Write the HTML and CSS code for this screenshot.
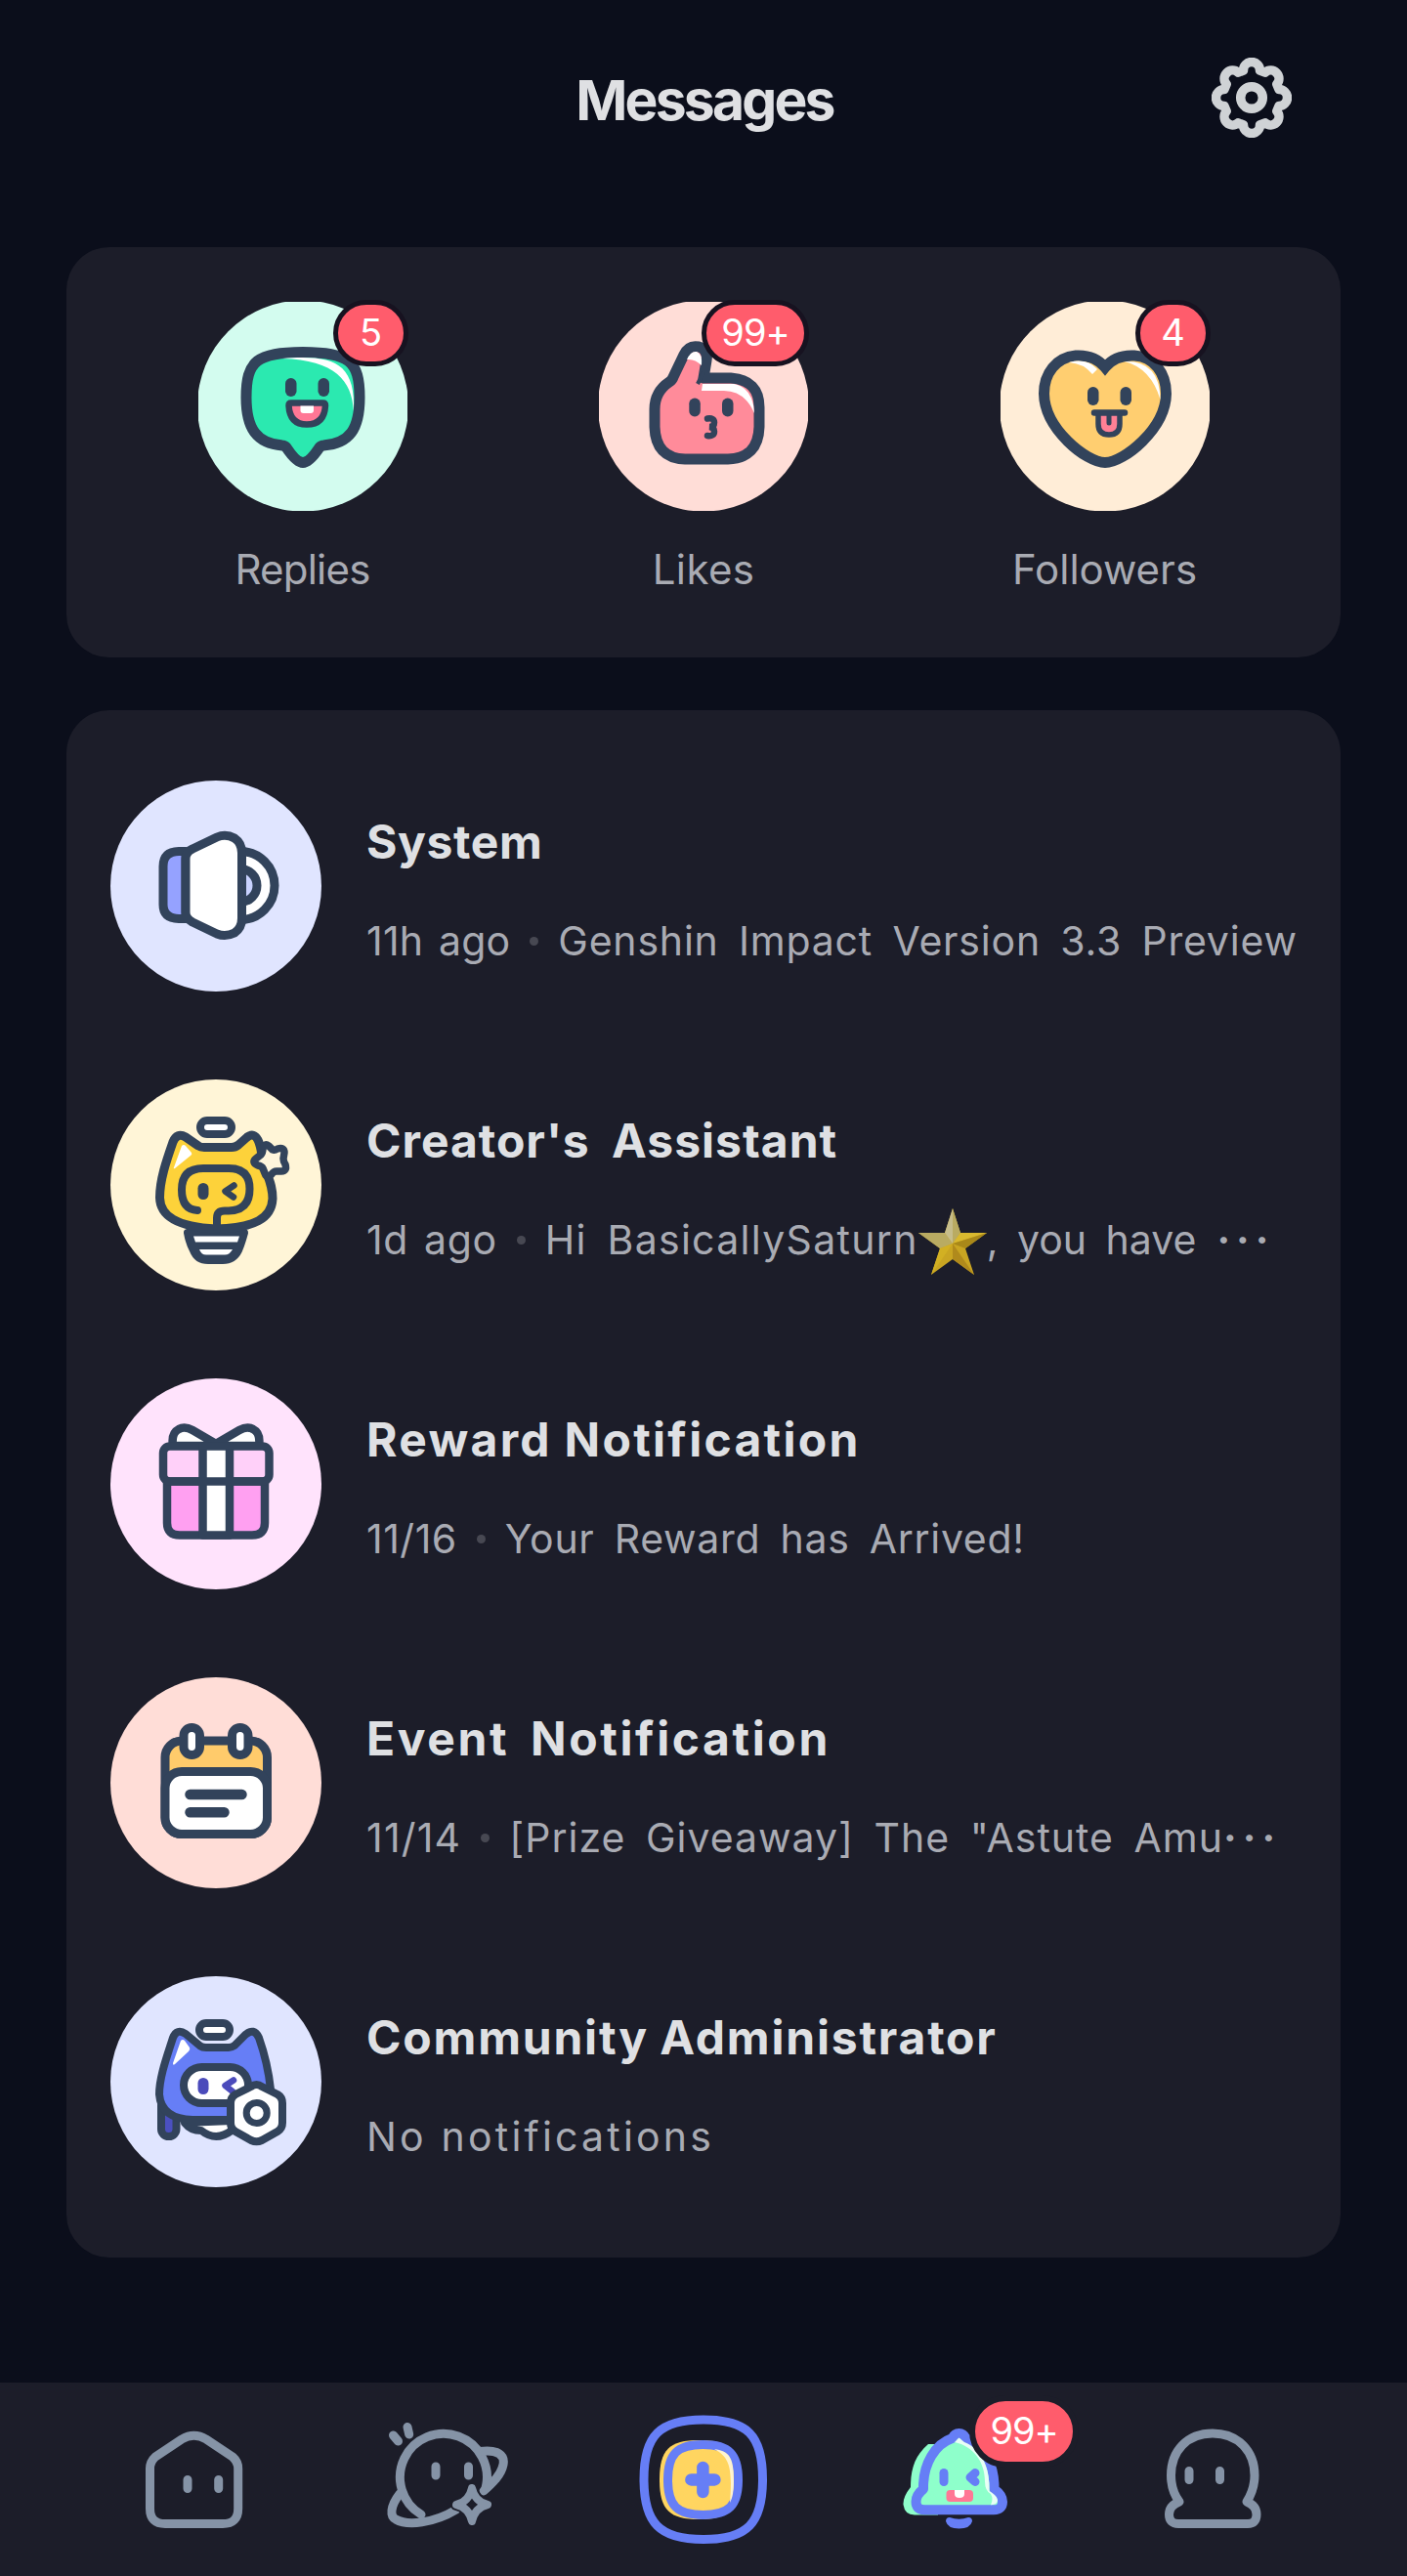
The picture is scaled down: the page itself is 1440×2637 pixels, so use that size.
FILE: index.html
```html
<!DOCTYPE html>
<html lang="en">
<head>
<meta charset="utf-8">
<title>Messages</title>
<link rel="stylesheet" href="styles.css">
</head>
<body>
<div class="screen">
  <header class="topbar">
    <h1 class="topbar-title">Messages</h1>
    <button class="settings" aria-label="Settings">
      <svg width="82" height="82" viewBox="-41 -41 82 82" fill="none" stroke="#cfd2d5" stroke-width="9.500" stroke-linejoin="round">
        <path d="M-8.5-28A8.5 8.5 0 0 1 8.5-28L13.8-25.8A8.5 8.5 0 0 1 25.8-13.8L28-8.5A8.5 8.5 0 0 1 28 8.5L25.8 13.8A8.5 8.5 0 0 1 13.8 25.8L8.5 28A8.5 8.5 0 0 1-8.5 28L-13.8 25.8A8.5 8.5 0 0 1-25.8 13.8L-28 8.5A8.5 8.5 0 0 1-28-8.5L-25.8-13.8A8.5 8.5 0 0 1-13.8-25.8Z"/>
        <circle r="11.3"/>
      </svg>
    </button>
  </header>

  <main class="content">
    <section class="card summary">
      <a class="summary-item">
        <span class="summary-icon">
          <svg width="214" height="214" viewBox="0 0 214 214">
            <circle cx="107" cy="106.5" r="108" fill="#d3fcef"/>
            <path d="M49 98C49 60 60 52 107 51.5C154 52 165 60 165 98C165 130 155 145 128 147Q126 147 124 149C118 158 112 164.500 107 164.500C102 164.500 96 158 90 149Q88 147 86 147C60 145 49 130 49 98Z" fill="#2be9b0" stroke="#32435b" stroke-width="11" stroke-linejoin="round"/>
            <path d="M86 58C138 54 161 62 159 112C157 80 140 60 86 58Z" fill="#fff"/>
            <rect x="89" y="78" width="11.500" height="19" rx="5.700" fill="#32435b"/>
            <rect x="122.500" y="78" width="11.500" height="19" rx="5.700" fill="#32435b"/>
            <path d="M92.500 106Q92.500 103.500 95 103.500H127.500Q130 103.500 130 106Q129 125.500 111 125.500Q93.500 125.500 92.500 106Z" fill="#ff7795" stroke="#32435b" stroke-width="6.500"/>
            <path d="M104.500 106.500H118V111Q118 114 115 114H107.500Q104.500 114 104.500 111Z" fill="#fff"/>
          </svg>
          <span class="badge">5</span>
        </span>
        <span class="summary-label label-replies">Replies</span>
      </a>
      <a class="summary-item">
        <span class="summary-icon">
          <svg width="214" height="214" viewBox="0 0 214 214">
            <circle cx="107" cy="106.500" r="108" fill="#ffddd7"/>
            <path d="M57 110Q57 92 72 82Q75 80 76 77L87 54Q92 44 102 46Q112 49 110 60L107 78H135Q164 80 164 108V128Q163 160 132 161H88Q58 160 57 128Z" fill="#ff8b9a" stroke="#32435b" stroke-width="11" stroke-linejoin="round"/>
            <path d="M107 72L101 84" stroke="#32435b" stroke-width="4"/>
            <path d="M106 84H138Q158 88 159 114Q149 91 128 91L105 91Z" fill="#fff"/>
            <path d="M90 59Q94 50 100 51Q106 53 105 65Q98 58 90 59Z" fill="#fff"/>
            <rect x="92.300" y="98.500" width="11.500" height="19" rx="5.700" fill="#32435b"/>
            <rect x="126" y="98.500" width="11.500" height="19" rx="5.700" fill="#32435b"/>
            <path d="M111 119.500Q118 118.500 118 123.500Q118 128 113 128Q118 128.500 118 132.500Q118 138 111 137" fill="none" stroke="#32435b" stroke-width="6.500" stroke-linecap="round"/>
          </svg>
          <span class="badge badge-wide">99+</span>
        </span>
        <span class="summary-label label-likes">Likes</span>
      </a>
      <a class="summary-item">
        <span class="summary-icon">
          <svg width="214" height="214" viewBox="0 0 214 214">
            <circle cx="107" cy="106.500" r="108" fill="#ffedd7"/>
            <path d="M107 67C98 56 86 54.500 77 55C57 57 44.500 73 44.500 94C45 130 88 164.500 107 164.500C126 164.500 169 130 169.500 94C169.500 73 157 56 137 55C128 54.500 116 56 107 67Z" fill="#ffce70" stroke="#32435b" stroke-width="11" stroke-linejoin="miter"/>
            <path d="M70 62Q88 57 99 69L94 74Q85 63 70 62Z" fill="#fff"/>
            <path d="M127 61Q163 60 163.500 100Q154 68 127 61Z" fill="#fff"/>
            <rect x="89" y="87" width="11.500" height="19" rx="5.700" fill="#32435b"/>
            <rect x="122.500" y="87" width="11.500" height="19" rx="5.700" fill="#32435b"/>
            <path d="M100 114V125Q100 136 111 136Q122 136 122 125V114" fill="#ff8095" stroke="#32435b" stroke-width="5.500"/>
            <path d="M111 114V124" stroke="#32435b" stroke-width="5" stroke-linecap="round"/>
            <path d="M96 113.500H127" stroke="#32435b" stroke-width="6.500" stroke-linecap="round"/>
          </svg>
          <span class="badge">4</span>
        </span>
        <span class="summary-label label-followers">Followers</span>
      </a>
    </section>

    <section class="card threads">
      <a class="thread thread-system">
        <svg class="avatar" viewBox="0 0 216 216">
          <circle cx="108" cy="108" r="108" fill="#e0e5ff"/>
          <g stroke="#32435b" stroke-width="9" stroke-linejoin="round">
            <path d="M77 72.500H70Q54 73 54 88V127Q54 141 70 141.500H77Z" fill="#95a2ff"/>
            <path d="M133 72.500A35 35 0 0 1 133 142.500Z" fill="#fff"/>
            <path d="M133 90.500A17 17 0 0 1 133 124.500Z" fill="#c9d2ff"/>
            <path d="M77 80Q77 73 84 70L109 58Q118 54 127 59Q134.500 64 134.500 74V141Q134.500 151 127 156Q118 160.500 109 157L84 145Q77 141 77 135Z" fill="#fff"/>
          </g>
        </svg>
        <div class="thread-text">
          <h2 class="thread-title">System</h2>
          <p class="thread-sub"><span class="date">11h ago</span><i class="sep"></i><span class="preview">Genshin Impact Version 3.3 Preview</span></p>
        </div>
      </a>

      <a class="thread thread-creator">
        <svg class="avatar" viewBox="0 0 216 216">
          <circle cx="108" cy="108" r="108" fill="#fff5d7"/>
          <g stroke="#32435b" stroke-width="8" stroke-linejoin="round" stroke-linecap="round">
            <path d="M79 157H137Q134 168 131 175Q126 185 115 185H100Q89 185 85 175Q81 168 79 157Z" fill="#32435b"/>
            <path d="M50.500 121C50.500 103 57 84 64 64Q68 54 77 59L90 68Q92 69.500 96 69.500H124Q128 69.500 131 67L140 59Q147 54 151 62C156 72 154 84 160 96C164 106 166 112 166 122C165 142 148 152 108 153C68 151 51 140 50.500 121Z" fill="#fdd23a" stroke-width="9"/>
            <rect x="92" y="42" width="32" height="14" rx="7" fill="#fff"/>
            <path d="M89 134Q73 133 73 113Q73 91 95 91H121Q142.500 91 142.500 112Q142.500 134 121 134.500H117Q109 134.500 109 142V153" fill="none"/>
            <path d="M126.500 108.500L117.500 114.500L126 120.500" fill="none" stroke-width="6.500"/>
          </g>
          <path d="M73 68Q75 66 77 68L83 75Q84 77 82 78L66 91Q64 92 65 90Z" fill="#fff"/>
          <rect x="89.500" y="106" width="11" height="17" rx="5.500" fill="#32435b"/>
          <path d="M85 160.500H132L130 166.500H87Z" fill="#fff"/>
          <path d="M91 174H125Q122 179.500 117 179.500H98Q93 179.500 91 174Z" fill="#fff"/>
          <path d="M156 70Q158 65 162 68L166 72Q168 73 171 71Q178 69 178 75L177 81Q177 84 179 87Q181 94 175 94H170Q167 94 165 97Q160 102 158 96L156 91Q155 89 151 88Q144 85 149 81L154 77Q156 75 156 70Z" fill="#fff6dc" stroke="#32435b" stroke-width="7.500" stroke-linejoin="round"/>
        </svg>
        <div class="thread-text">
          <h2 class="thread-title">Creator's Assistant</h2>
          <p class="thread-sub"><span class="date">1d ago</span><i class="sep"></i><span class="preview">Hi BasicallySaturn</span><svg class="star" viewBox="0 0 70 68" role="img" aria-label="star">
              <path d="M35 0L43 25H70L48 41L57 68L35 52L13 68L22 41L0 25H27Z" fill="#c9a522"/>
              <path d="M35 0L43 25L35 36L27 25H0L22 41L35 36Z" fill="#b9ab62"/>
              <path d="M35 0V36L27 25Z" fill="#c6bd8c"/>
              <path d="M43 25H70L35 36Z" fill="#d9b92f"/>
              <path d="M35 36L22 41L13 68Z" fill="#d2b023"/>
              <path d="M35 36V52L57 68Z" fill="#b08a1c"/>
              <path d="M35 36L48 41L70 25Z" fill="#a98819"/>
            </svg><span class="tail">, you have</span><span class="dots">···</span></p>
        </div>
      </a>

      <a class="thread thread-reward">
        <svg class="avatar" viewBox="0 0 216 216">
          <circle cx="108" cy="108" r="108" fill="#ffe3fc"/>
          <g stroke="#32435b" stroke-width="8.500" stroke-linejoin="round">
            <path d="M64 69Q62 56 70 52Q76 48.500 84 53L108 67L132 53Q140 48.500 146 52Q154 56 152 69Z" fill="#fff"/>
            <path d="M58 105H158V148Q158 160.500 145 160.500H71Q58 160.500 58 148Z" fill="#ffa0f1"/>
            <rect x="54" y="69.500" width="108.500" height="36" rx="7" fill="#ffd0f9"/>
            <path d="M94.500 69.500H122V160.500H94.500Z" fill="#fff"/>
            <path d="M58 105.500H158" fill="none"/>
          </g>
        </svg>
        <div class="thread-text">
          <h2 class="thread-title">Reward Notification</h2>
          <p class="thread-sub"><span class="date">11/16</span><i class="sep"></i><span class="preview">Your Reward has Arrived!</span></p>
        </div>
      </a>

      <a class="thread thread-event">
        <svg class="avatar" viewBox="0 0 216 216">
          <circle cx="108" cy="108" r="108" fill="#ffddd7"/>
          <g stroke="#32435b" stroke-width="9">
            <rect x="56" y="65" width="104.500" height="95.500" rx="17" fill="#ffcb6b"/>
            <rect x="56" y="96.500" width="104.500" height="64" rx="17" fill="#fff"/>
            <rect x="75" y="51.500" width="16.500" height="28" rx="8.200" fill="#fff"/>
            <rect x="124.500" y="51.500" width="16.500" height="28" rx="8.200" fill="#fff"/>
          </g>
          <path d="M81.500 120H134.500M81.500 138.300H116.500" stroke="#32435b" stroke-width="10.500" stroke-linecap="round"/>
        </svg>
        <div class="thread-text">
          <h2 class="thread-title">Event Notification</h2>
          <p class="thread-sub"><span class="date">11/14</span><i class="sep"></i><span class="preview">[Prize Giveaway] The "Astute Amu</span><span class="dots">···</span></p>
        </div>
      </a>

      <a class="thread thread-community">
        <svg class="avatar" viewBox="0 0 216 216">
          <circle cx="108" cy="108" r="108" fill="#e0e5ff"/>
          <g stroke="#32435b" stroke-width="8" stroke-linejoin="round" stroke-linecap="round">
            <rect x="52" y="125" width="15.500" height="39" rx="7.500" fill="#4b50c0"/>
            <path d="M76 150Q82 158 93 158Q108 170 124 158V148Z" fill="#fff"/>
            <path d="M50 121C50 103 58 82 64 63Q68 53 77 59L92 71.500Q94 73 98 73H121Q124 73 127 71L138 60Q147 52 152 63C158 80 162 97 164 116V147H84Q52 146 50 121Z" fill="#667ef6"/>
            <rect x="91" y="48" width="31" height="14" rx="7" fill="#fff"/>
            <rect x="75" y="93" width="66" height="37" rx="18.500" fill="#fff"/>
            <path d="M126 106.500L117.500 112L125 118" fill="none" stroke="#4b4bbb" stroke-width="6.500"/>
            <path d="M144 113Q149.500 109 155 113L171 121Q176 124 176 130V150Q176 156 171 159L155 168Q149.500 170.500 144 168L128 159Q123 156 123 150V130Q123 124 128 121Z" fill="#fff"/>
            <circle cx="149.700" cy="140" r="10.500" fill="#fff" stroke-width="7"/>
          </g>
          <path d="M72 66Q74 64 76 66L81 73Q82 75 80 77L66 90Q64 92 64 89Z" fill="#fff"/>
          <rect x="89.500" y="104" width="11" height="17" rx="5.500" fill="#4b4bbb"/>
        </svg>
        <div class="thread-text">
          <h2 class="thread-title">Community Administrator</h2>
          <p class="thread-sub"><span class="preview">No notifications</span></p>
        </div>
      </a>
    </section>
  </main>

  <nav class="tabbar">
    <a class="tab" aria-label="Home">
      <svg width="118" height="120" viewBox="0 0 118 120" fill="none" stroke="#8593a6" stroke-width="9" stroke-linejoin="round">
        <path d="M13.500 47Q13.500 40 19 35L46 17Q58.500 9.500 71 17L98 35Q103.700 40 103.700 47V88Q103.700 103.500 88 103.500H29Q13.500 103.500 13.500 88Z"/>
        <path d="M52 58.500V67.500M83.700 58.500V67.500" stroke-linecap="round"/>
      </svg>
    </a>
    <a class="tab tab-explore" aria-label="Explore">
      <svg width="160" height="160" viewBox="0 0 160 160" fill="none" stroke="#8593a6" stroke-width="9" stroke-linejoin="round" stroke-linecap="round">
        <path d="M52 124A44.500 44.500 0 1 1 118 97"/>
        <path d="M30 103C20 116 20 126 26 129C38 136 65 133 88 119"/>
        <path d="M112 59.500C130 57 138 63 136 73C134 83 126 91 116 100"/>
        <path d="M23.500 43L28.500 49M38 34.500L39.700 42M67 75V84M100.500 75V84"/>
        <path d="M104 97Q107 111 120 114Q107 117 104 131Q101 117 88 114Q101 111 104 97Z" stroke="#1c1d29" stroke-width="12"/>
        <path d="M104 97Q107 111 120 114Q107 117 104 131Q101 117 88 114Q101 111 104 97Z" stroke-width="8"/>
      </svg>
    </a>
    <a class="tab tab-create" aria-label="Create">
      <svg width="142" height="146" viewBox="0 0 142 146">
        <path d="M71 12C116 12 131.500 28 131.500 73C131.500 118 116 134.500 71 134.500C26 134.500 10 118 10 73C10 28 26 12 71 12Z" fill="none" stroke="#667ef6" stroke-width="9"/>
        <path d="M66 33C97 33 107 43 107 73.500C107 104 97 114 66 114C36 114 26 104 26 73.500C26 43 36 33 66 33Z" fill="#ffd560"/>
        <path d="M70.500 37.500C97 37.500 106.500 47 106.500 73.500C106.500 100 97 109.500 70.500 109.500C44 109.500 34.500 100 34.500 73.500C34.500 47 44 37.500 70.500 37.500Z" fill="#ffd560" stroke="#667ef6" stroke-width="9"/>
        <path d="M82 42C97 44 102 50 102 74C102 84 101 92 98 97C101 60 97 50 82 42Z" fill="#fff3cf"/>
        <path d="M70.400 61V86M58.400 73.400H82.400" stroke="#667ef6" stroke-width="12.500" stroke-linecap="round"/>
      </svg>
    </a>
    <a class="tab" aria-label="Messages">
      <svg width="122" height="120" viewBox="0 0 122 120">
        <path d="M30 22C16 34 12 48 12 66Q4 76 4.500 84Q6 94.500 16 94.500H40V22Z" fill="#8effcb"/>
        <path d="M61.500 11Q66 11 68.500 16C86 22 97.500 42 97.500 66V68Q106 74 106 81Q106 89 97 89.300H26Q17.500 89 17.500 81Q17.500 74 25 68V66C25 42 37 22 54.500 16Q57 11 61.500 11Z" fill="#8effcb" stroke="#667ef6" stroke-width="10" stroke-linejoin="round"/>
        <path d="M57 20L61.500 15.500L67 20C84 27 92.500 44 92.500 66V70Q101 75 101 80Q100 84 94 84.300Q97 78 94 73Q88 70 88 60C88 40 76 24 57 20Z" fill="#e8fff6"/>
        <rect x="41.500" y="47" width="9" height="18" rx="4.500" fill="#667ef6"/>
        <path d="M78 51.500L73 56L78 60.500" fill="none" stroke="#667ef6" stroke-width="9" stroke-linecap="round" stroke-linejoin="round"/>
        <rect x="48.500" y="69" width="27.500" height="12" rx="4" fill="#ff7795"/>
        <path d="M57 69H67V73Q67 77 62 77Q57 77 57 73Z" fill="#fff"/>
        <path d="M52 97Q61.500 100.500 71 97Q75 97 75 101Q73 108.500 61.500 108.500Q50 108.500 48 101Q48 97 52 97Z" fill="#667ef6"/>
      </svg>
      <span class="badge tab-badge">99+</span>
    </a>
    <a class="tab" aria-label="Profile">
      <svg width="122" height="120" viewBox="0 0 122 120" fill="none" stroke="#8593a6" stroke-width="9" stroke-linejoin="round" stroke-linecap="round">
        <path d="M61 11C87 11 104 29 104 54C104 65 101 73 96 81Q106 85 106 94Q106 103.500 97 103.500H26Q16.500 103.500 16.500 94Q16.500 85 27 81C21 73 18.500 65 18.500 54C18.500 29 35 11 61 11Z"/>
        <path d="M37 49.500V58.500M68.500 49.500V58.500"/>
      </svg>
    </a>
  </nav>
</div>
</body>
</html>
```
FILE: styles.css
```css
* { box-sizing: border-box; }

body {
  margin: 0;
  background: #0b0e1b;
  color: #dfe0e3;
  font-family: Inter, "Open Sans", sans-serif;
}

svg { display: block; }
h1, h2, p { margin: 0; font-weight: inherit; }

.screen {
  display: flex;
  flex-direction: column;
  width: 1440px;
  height: 2637px;
}

/* Top bar */
.topbar {
  display: grid;
  grid-template-columns: 1fr auto 1fr;
  align-items: start;
  height: 253px;
  padding: 59px 118px 0;
}
.topbar-title {
  grid-column: 2;
  padding: 14px 0 0 2px;
  font-size: 57px;
  line-height: 60px;
  font-weight: 700;
  letter-spacing: -2.8px;
}
.settings {
  justify-self: end;
  padding: 0;
  border: 0;
  background: none;
}

/* Cards */
.content {
  display: flex;
  flex-direction: column;
  gap: 54px;
  padding: 0 68px;
}
.card {
  border-radius: 44px;
  background: #1c1d29;
}

.summary {
  display: grid;
  grid-template-columns: repeat(3, 410.5px);
  justify-content: center;
  height: 420px;
  padding-top: 56px;
}
.summary-item {
  display: flex;
  flex-direction: column;
  align-items: center;
  gap: 35px;
}
.summary-icon { position: relative; }
.summary-label {
  font-size: 42px;
  line-height: 50px;
  color: #a9abb3;
}
.label-replies { letter-spacing: -.8px; }
.label-likes { letter-spacing: .4px; }

.badge {
  position: absolute;
  top: -2px;
  right: -1px;
  min-width: 77px;
  height: 68px;
  border: 5px solid #171220;
  border-radius: 34px;
  background: #ff5c6c;
  color: #fff;
  font-size: 38px;
  line-height: 56px;
  letter-spacing: -1px;
  text-align: center;
}
.badge-wide { width: 110px; }

/* Threads */
.threads {
  display: flex;
  flex-direction: column;
  gap: 90px;
  height: 1584px;
  padding: 72px 45px;
}
.thread {
  display: flex;
  gap: 46px;
  height: 216px;
}
.avatar { flex: none; width: 216px; height: 216px; }
.thread-text {
  display: flex;
  flex-direction: column;
  gap: 41px;
  padding-top: 33px;
  white-space: nowrap;
}
.thread-title {
  font-size: 48px;
  line-height: 60px;
  font-weight: 700;
  letter-spacing: 1px;
  word-spacing: 10px;
}
.thread-sub {
  display: flex;
  align-items: center;
  height: 60px;
  font-size: 41px;
  line-height: 60px;
  color: #a9abb3;
  word-spacing: 8px;
}
.date { word-spacing: 4px; }
.sep {
  width: 9px;
  height: 9px;
  margin: 0 20px;
  border-radius: 50%;
  background: #474852;
}
.star {
  width: 70px;
  height: 68px;
  margin: 4px 0 0 0;
}
.dots {
  font-weight: 700;
  letter-spacing: 6px;
}

.thread-system .thread-title { letter-spacing: .6px; }
.thread-system .date { letter-spacing: .2px; }
.thread-system .preview { letter-spacing: .8px; }
.thread-creator .date { letter-spacing: .6px; }
.thread-creator .preview { letter-spacing: 1.3px; }
.thread-creator .dots { margin-left: 21px; }
.thread-reward .thread-title { letter-spacing: 2.3px; word-spacing: -1px; }
.thread-reward .date { letter-spacing: .5px; }
.thread-reward .preview { letter-spacing: .7px; }
.thread-event .thread-title { letter-spacing: 2.6px; word-spacing: 8px; }
.thread-event .date { letter-spacing: 1.2px; }
.thread-event .preview { letter-spacing: 1px; }
.thread-community .thread-title { letter-spacing: 1.8px; word-spacing: -2px; }
.thread-community .preview { letter-spacing: 3.2px; word-spacing: 0; }

/* Tab bar */
.tabbar {
  display: grid;
  grid-template-columns: repeat(5, 260.7px);
  justify-content: center;
  height: 198px;
  margin-top: auto;
  padding-top: 26px;
  background: #1c1d29;
}
.tab {
  position: relative;
  display: flex;
  justify-content: center;
  align-items: flex-start;
  padding-top: 15px;
}
.tab-explore { padding-top: 0; margin-top: -15px; }
.tab-create { padding-top: 0; }
.tab-badge {
  top: -13px;
  right: 7px;
  width: 112px;
  height: 74px;
  border-width: 6px;
  border-color: #1c1d29;
  border-radius: 37px;
  line-height: 60px;
}
```
